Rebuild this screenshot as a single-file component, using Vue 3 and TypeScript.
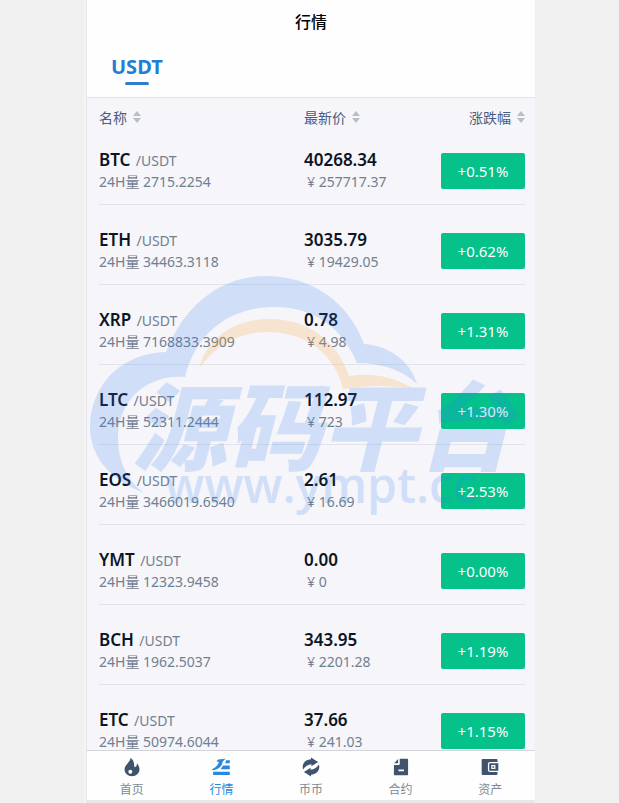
<script setup lang="ts">
interface Market {
  coin: string
  volume: string
  price: string
  cny: string
  change: string
}

interface Tab {
  label: string
  icon: string
  active?: boolean
}

const columns: string[] = ['名称', '最新价', '涨跌幅']

const markets: Market[] = [
  { coin: 'BTC', volume: '2715.2254', price: '40268.34', cny: '257717.37', change: '+0.51%' },
  { coin: 'ETH', volume: '34463.3118', price: '3035.79', cny: '19429.05', change: '+0.62%' },
  { coin: 'XRP', volume: '7168833.3909', price: '0.78', cny: '4.98', change: '+1.31%' },
  { coin: 'LTC', volume: '52311.2444', price: '112.97', cny: '723', change: '+1.30%' },
  { coin: 'EOS', volume: '3466019.6540', price: '2.61', cny: '16.69', change: '+2.53%' },
  { coin: 'YMT', volume: '12323.9458', price: '0.00', cny: '0', change: '+0.00%' },
  { coin: 'BCH', volume: '1962.5037', price: '343.95', cny: '2201.28', change: '+1.19%' },
  { coin: 'ETC', volume: '50974.6044', price: '37.66', cny: '241.03', change: '+1.15%' },
]

const tabs: Tab[] = [
  { label: '首页', icon: 'M10 1C11 5.500 3 9 3 15C3 19.500 7 23 12 23C17 23 21 19.500 21 15C21 11.500 19.500 9.500 18 7.500C18 10 17 12 15.500 12C13.500 12 16.500 5 10 1ZM10 15.200A2.400 2.400 0 1 1 10 20A2.400 2.400 0 1 1 10 15.200Z' },
  { label: '行情', icon: 'M1.500 15.800V14.500C6 12.500 8.500 9.500 9.500 6L6.500 5L8.500 3L17.500 2L14 5.500C13.500 10.500 9.500 15.500 1.500 15.800ZM18.200 4H22.500V7.500H17ZM14.500 10.300H22.500V14.700H11.500ZM2.500 17.700H22.500V21.700H2.500Z', active: true },
  { label: '币币', icon: 'M2.500 15C0.500 8 5.500 3 12 2.800V0.500L20.500 6L12.500 11.200V8.800C8 9 5.500 11 2.500 15ZM21.500 9C23.500 16 18.500 21 12 21.200V23.500L3.500 18L11.500 12.800V15.200C16 15 18.500 13 21.500 9Z' },
  { label: '合约', icon: 'M10.500 2H19.500Q20.500 2 20.500 3V21Q20.500 22 19.500 22H4.500Q3.500 22 3.500 21V9.500H9.500Q10.500 9.500 10.500 8.500ZM8.500 2.500V7.500H3.800ZM9 15V17H15.500V15Z' },
  { label: '资产', icon: 'M3 2.500H20Q21 2.500 21 3.500V6H12Q9.500 6 9.500 8.500V15.500Q9.500 18 12 18H21V20.500Q21 21.500 20 21.500H3Q2 21.500 2 20.500V3.500Q2 2.500 3 2.500ZM12 7.500H22V16.500H12Q11 16.500 11 15.500V8.500Q11 7.500 12 7.500ZM13.500 9.700V14.300H18.500V9.700ZM15 11H17V13H15Z' },
]
</script>

<template>
  <div class="app">
    <header class="top">
      <h1 class="title">行情</h1>
      <nav class="quotes"><a href="#usdt" class="quote">USDT</a></nav>
    </header>

    <main class="market">
      <div class="columns">
        <button v-for="c in columns" :key="c" type="button" class="sort">
          {{ c }}
          <svg class="arrows" viewBox="0 0 8 12" aria-hidden="true"><path d="M4 0L8 5H0ZM4 12L0 7H8Z" /></svg>
        </button>
      </div>
      <ul class="list">
        <li v-for="m in markets" :key="m.coin" class="row">
          <div>
            <p class="main"><b>{{ m.coin }}</b> <span class="pair">/USDT</span></p>
            <p class="sub">24H量 {{ m.volume }}</p>
          </div>
          <div>
            <p class="main"><b>{{ m.price }}</b></p>
            <p class="sub cny">¥ {{ m.cny }}</p>
          </div>
          <button type="button" class="change">{{ m.change }}</button>
        </li>
      </ul>
    </main>

    <nav class="tabbar">
      <a v-for="t in tabs" :key="t.label" href="#" class="tab" :class="{ active: t.active }">
        <svg class="icon" viewBox="0 0 24 24" aria-hidden="true"><path :d="t.icon" fill-rule="evenodd" /></svg>
        <span>{{ t.label }}</span>
      </a>
    </nav>

    <svg class="watermark" viewBox="0 0 448 265" aria-hidden="true">
      <path class="blue" d="M57 228C20 213 3 190 3 161C4 118 36 88 79 87C97 40 134 11 178 11C226 11 262 38 277 79C303 81 324 97 330 119C315 105 295 98 270 98C256 64 228 42 188 42C142 42 109 68 98 112C57 109 31 138 31 173C31 198 42 217 57 228Z" />
      <path class="gold" d="M112 104C120 73 147 54 183 54C220 54 250 75 262 111C286 107 308 112 327 124C304 120 281 120 256 124C248 89 219 67 180 67C150 67 127 82 112 104Z" />
      <text class="blue name" x="45" y="198">源码平台</text>
      <text class="blue site" x="78" y="238">www.ympt.cc</text>
    </svg>
  </div>
</template>

<style>
body {
  margin: 0;
  padding-left: 2px;
  background: #f0f0f0;
}
</style>

<style scoped>
.app {
  position: relative;
  box-sizing: border-box;
  display: flex;
  flex-direction: column;
  width: 100%;
  max-width: 449px;
  height: 100vh;
  margin: 0 auto;
  border-left: 1px solid #e4e5e8;
  border-bottom: 3px solid #e8e8e8;
  background: #f5f5fa;
  box-shadow: -2px 0 #f5f5f5;
  font-family: "Noto Sans", "Noto Sans CJK SC", sans-serif;
}
.top {
  flex: none;
  border-bottom: 1px solid #e1e3e8;
  background: #fefefe;
}
.title {
  margin: 0;
  color: #000;
  font-size: 16px;
  font-weight: 500;
  line-height: 44px;
  text-align: center;
}
.quotes {
  display: flex;
  height: 53px;
  padding: 0 24px;
}
.quote {
  box-sizing: border-box;
  display: flex;
  flex-direction: column;
  align-items: center;
  padding-top: 4px;
  color: #1f7fd6;
  font-size: 20px;
  font-weight: 700;
  line-height: 38px;
  text-decoration: none;
}
.quote::after {
  content: "";
  width: 24px;
  height: 3px;
  margin-top: -4px;
  border-radius: 2px;
  background: #2f7dcd;
}
.market {
  flex: 1;
  min-height: 0;
  overflow: hidden;
  padding: 0 10px 0 12px;
}
.columns {
  display: grid;
  grid-template-columns: 205px 1fr auto;
  height: 27px;
}
.sort {
  display: flex;
  align-items: center;
  gap: 6px;
  height: 38px;
  padding: 0;
  border: 0;
  background: none;
  color: #4d5b80;
  font: 14px "Noto Sans", "Noto Sans CJK SC", sans-serif;
}
.arrows {
  width: 8px;
  height: 12px;
  fill: #b7bec6;
}
.list {
  margin: 0;
  padding: 0;
  list-style: none;
}
.row {
  box-sizing: border-box;
  display: grid;
  grid-template-columns: 205px 1fr 84px;
  align-items: center;
  height: 80px;
  padding: 24px 0 11px;
  border-bottom: 1px solid #e1e4ea;
}
.row p {
  margin: 0;
  height: 22px;
  line-height: 22px;
  white-space: nowrap;
}
.main {
  color: #0c1524;
  font-size: 17px;
}
.main b {
  font-weight: 600;
}
.pair {
  margin-left: 1px;
  color: #71808f;
  font-size: 14px;
}
.sub {
  color: #71808f;
  font-size: 14px;
}
.cny {
  padding-left: 3px;
}
.change {
  height: 36px;
  padding: 0;
  border: 0;
  border-radius: 2px;
  background: #05c28b;
  color: #fff;
  font: 15px "Noto Sans", sans-serif;
}
.tabbar {
  flex: none;
  display: flex;
  height: 49px;
  border-top: 1px solid #d3d5d9;
  background: #fefefe;
}
.tab {
  flex: 1;
  display: flex;
  flex-direction: column;
  align-items: center;
  gap: 3px;
  padding-top: 6px;
  color: #7d8a98;
  font-size: 12px;
  line-height: 20px;
  text-decoration: none;
}
.icon {
  width: 24px;
  height: 24px;
  fill: #40536c;
}
.active {
  color: #2688e0;
}
.active .icon {
  fill: #2688e0;
}
.watermark {
  position: absolute;
  top: 265px;
  left: 0;
  width: 100%;
  pointer-events: none;
  opacity: 0.18;
}
.blue {
  fill: #2d7cf3;
}
.gold {
  fill: #ff9c1a;
}
.name {
  font: italic 900 95px "Noto Sans CJK SC", sans-serif;
}
.site {
  font: 600 48px "Open Sans", sans-serif;
}
</style>
